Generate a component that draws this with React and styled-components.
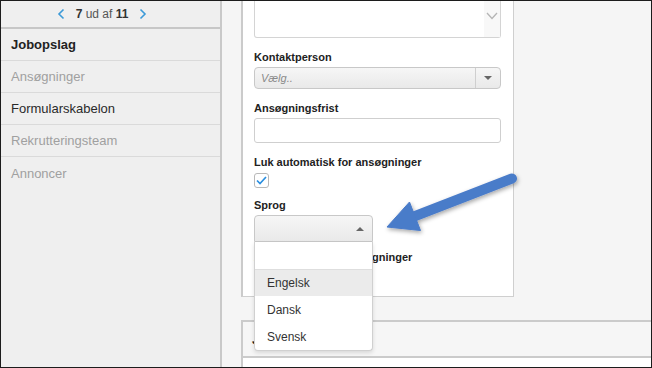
import React from "react";
import styled, { createGlobalStyle } from "styled-components";

const GlobalStyle = createGlobalStyle`
  html, body {
    margin: 0;
    padding: 0;
    background: #fff;
  }
  * {
    box-sizing: border-box;
  }
`;

const Frame = styled.div`
  position: relative;
  width: 652px;
  height: 368px;
  border: 1px solid #1c1c1c;
  display: flex;
  overflow: hidden;
  font-family: "Liberation Sans", Arial, sans-serif;
  color: #333;
`;

const Sidebar = styled.nav`
  width: 221px;
  flex-shrink: 0;
  background: #efefef;
  border-right: 2px solid #c9c9c9;
  display: flex;
  flex-direction: column;
`;

const Pager = styled.div`
  height: 28px;
  display: flex;
  align-items: center;
  justify-content: center;
  gap: 7px;
  font-size: 12px;
  color: #555;
  border-bottom: 2px solid #c7c7c7;
  padding-right: 17px;

  b {
    color: #333;
  }
`;

const PagerText = styled.span`
  margin: 0 4px;
`;

const NavItem = styled.div`
  height: 32px;
  display: flex;
  align-items: center;
  padding-left: 10px;
  font-size: 13px;
  border-bottom: ${(p) => (p.$last ? "none" : "1px solid #dadada")};
  color: ${(p) => (p.$active ? "#222" : p.$muted ? "#a0a0a0" : "#2a2a2a")};
  font-weight: ${(p) => (p.$active ? "bold" : "normal")};
`;

const Main = styled.main`
  flex: 1;
  background: #f5f5f5;
  padding-left: 19px;
  display: flex;
  flex-direction: column;
`;

const FormCard = styled.section`
  width: 273px;
  height: 297px;
  margin-top: -1px;
  background: #fff;
  border: 1px solid #cfcfcf;
  border-top: none;
  border-left: 2px solid #cbcbcb;
  padding: 0 12px 0 11px;
  flex-shrink: 0;
`;

const Textarea = styled.div`
  height: 39px;
  margin-top: -1px;
  border: 1px solid #d4d4d4;
  border-top: none;
  border-radius: 0 0 3px 3px;
  display: flex;
  justify-content: flex-end;
`;

const ScrollTrack = styled.div`
  width: 16px;
  background: #f8f8f8;
  display: flex;
  justify-content: center;
  padding-top: 13px;
`;

const Field = styled.div`
  margin-top: ${(p) => p.$gap || 12}px;
  position: relative;
`;

const Label = styled.div`
  font-size: 11px;
  font-weight: bold;
  line-height: 14px;
  color: #222;
  margin-bottom: ${(p) => (p.$tight ? 4 : 3)}px;
  white-space: nowrap;
`;

const SelectBox = styled.div`
  height: ${(p) => p.$h}px;
  width: ${(p) => p.$w || "100%"};
  border: 1px solid #c8c8c8;
  border-radius: ${(p) => (p.$open ? "4px 4px 0 0" : "4px")};
  background: linear-gradient(#f6f6f6, #e9e9e9);
  display: flex;
  align-items: stretch;
`;

const Placeholder = styled.span`
  flex: 1;
  display: flex;
  align-items: center;
  padding-left: 6px;
  font-size: 11px;
  font-style: italic;
  color: #8a8a8a;
`;

const CaretCell = styled.span`
  width: ${(p) => (p.$split ? 25 : 24)}px;
  margin-left: auto;
  border-left: ${(p) => (p.$split ? "1px solid #cfcfcf" : "none")};
  display: flex;
  align-items: center;
  justify-content: center;
`;

const Caret = styled.span`
  width: 0;
  height: 0;
  border-left: 4px solid transparent;
  border-right: 4px solid transparent;
  ${(p) =>
    p.$up
      ? "border-bottom: 4px solid #666;"
      : "border-top: 4px solid #666;"}
`;

const TextInput = styled.div`
  height: 25px;
  border: 1px solid #cfcfcf;
  border-radius: 3px;
  background: #fff;
`;

const Checkbox = styled.div`
  width: 15px;
  height: 15px;
  border: 1px solid #b9b9b9;
  border-radius: 3px;
  background: #fff;
  display: flex;
  align-items: center;
  justify-content: center;
`;

const Dropdown = styled.ul`
  position: absolute;
  left: 0;
  top: 100%;
  width: 119px;
  margin: 0;
  padding: 0;
  list-style: none;
  background: #fff;
  border: 1px solid #d0d0d0;
  border-top: none;
  border-radius: 0 0 4px 4px;
  box-shadow: 0 2px 4px rgba(0, 0, 0, 0.12);
  z-index: 2;
`;

const Option = styled.li`
  height: 27px;
  display: flex;
  align-items: center;
  padding-left: 12px;
  font-size: 12px;
  color: #333;
  background: ${(p) => (p.$hover ? "#ebebeb" : "transparent")};
  border-top: ${(p) => (p.$hover ? "1px solid #dedede" : "none")};
`;

const SubCard = styled.section`
  margin-top: 23px;
  flex: 1;
  border-top: 2px solid #cbcbcb;
  border-left: 2px solid #cbcbcb;
  background: #fff;
  display: flex;
  flex-direction: column;
`;

const SubHeader = styled.div`
  height: 36px;
  background: #f6f6f6;
  border-bottom: 2px solid #cbcbcb;
  display: flex;
  align-items: center;
  padding-left: 9px;
  font-size: 13px;
  font-weight: bold;
  color: #222;
`;

const ArrowLayer = styled.svg`
  position: absolute;
  left: -1px;
  top: -1px;
  pointer-events: none;
  z-index: 3;
  overflow: visible;
`;

const Chevron = ({ dir }) => (
  <svg width="8" height="12" viewBox="0 0 8 12">
    <path
      d={dir === "left" ? "M6.5 1.5 L2 6 L6.5 10.5" : "M1.5 1.5 L6 6 L1.5 10.5"}
      fill="none"
      stroke="#3c9ad8"
      strokeWidth="1.6"
    />
  </svg>
);

const menu = [
  { label: "Jobopslag", active: true },
  { label: "Ansøgninger", muted: true },
  { label: "Formularskabelon" },
  { label: "Rekrutteringsteam", muted: true },
  { label: "Annoncer", muted: true },
];

export default function App() {
  return (
    <>
      <GlobalStyle />
      <Frame>
        <Sidebar>
          <Pager>
            <Chevron dir="left" />
            <PagerText>
              <b>7</b> ud af <b>11</b>
            </PagerText>
            <Chevron dir="right" />
          </Pager>
          {menu.map((m, i) => (
            <NavItem
              key={m.label}
              $active={m.active}
              $muted={m.muted}
              $last={i === menu.length - 1}
            >
              {m.label}
            </NavItem>
          ))}
        </Sidebar>

        <Main>
          <FormCard>
            <Textarea>
              <ScrollTrack>
                <svg width="12" height="8" viewBox="0 0 12 8">
                  <path d="M1 1 L6 6.5 L11 1" fill="none" stroke="#b5b5b5" strokeWidth="1.3" />
                </svg>
              </ScrollTrack>
            </Textarea>

            <Field>
              <Label>Kontaktperson</Label>
              <SelectBox $h={22}>
                <Placeholder>Vælg..</Placeholder>
                <CaretCell $split>
                  <Caret />
                </CaretCell>
              </SelectBox>
            </Field>

            <Field>
              <Label>Ansøgningsfrist</Label>
              <TextInput />
            </Field>

            <Field>
              <Label $tight>Luk automatisk for ansøgninger</Label>
              <Checkbox>
                <svg width="11" height="9" viewBox="0 0 11 9">
                  <path d="M1 4.5 L4 7.5 L10 1" fill="none" stroke="#2b8fe0" strokeWidth="1.7" />
                </svg>
              </Checkbox>
            </Field>

            <Field $gap={10}>
              <Label>Sprog</Label>
              <SelectBox $h={27} $w="119px" $open>
                <CaretCell>
                  <Caret $up />
                </CaretCell>
              </SelectBox>
              <Dropdown>
                <Option />
                <Option $hover>Engelsk</Option>
                <Option>Dansk</Option>
                <Option>Svensk</Option>
              </Dropdown>
            </Field>

            <Field $gap={8}>
              <Label>Anonymiser altid ansøgninger</Label>
            </Field>
          </FormCard>

          <SubCard>
            <SubHeader>Jobannonce</SubHeader>
          </SubCard>
        </Main>

        <ArrowLayer width="652" height="368" viewBox="0 0 652 368">
          <defs>
            <filter id="shadow" x="-20%" y="-40%" width="140%" height="180%">
              <feDropShadow dx="1" dy="2" stdDeviation="2" floodColor="#000" floodOpacity="0.35" />
            </filter>
          </defs>
          <g filter="url(#shadow)" fill="#4a7bc9" stroke="#4a7bc9">
            <line x1="512" y1="178.5" x2="414" y2="216.5" strokeWidth="10" strokeLinecap="round" />
            <polygon points="387,227 409.5,202 420.5,230.5" strokeWidth="1" strokeLinejoin="round" />
          </g>
        </ArrowLayer>
      </Frame>
    </>
  );
}
